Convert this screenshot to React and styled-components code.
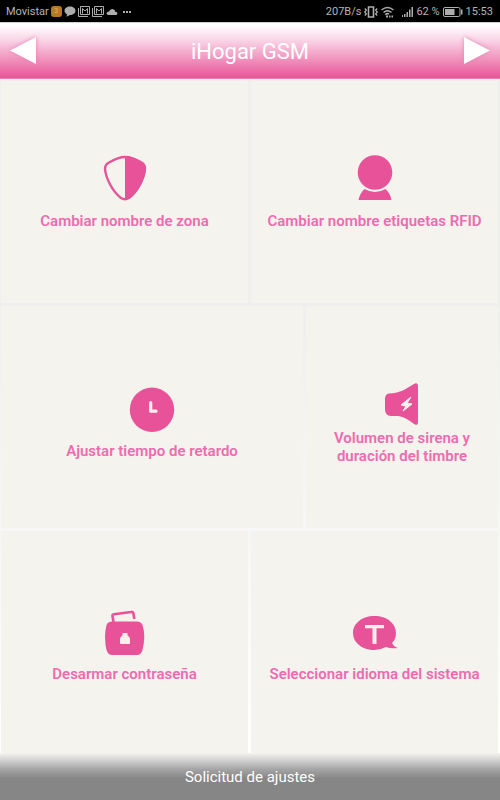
import styled, { createGlobalStyle } from 'styled-components';

const GlobalStyle = createGlobalStyle`
  * {
    box-sizing: border-box;
  }

  body {
    margin: 0;
    font-family: Roboto, 'Liberation Sans', sans-serif;
  }
`;

const Page = styled.div`
  display: flex;
  flex-direction: column;
  min-height: 100vh;
`;

const StatusBar = styled.div`
  display: flex;
  align-items: center;
  justify-content: space-between;
  height: 22px;
  padding: 1px 7px 0 6px;
  background: #000;
  color: #b4b4b4;
  font-size: 11px;
  line-height: 20px;
  white-space: nowrap;
`;

const StatusGroup = styled.div`
  display: flex;
  align-items: center;
  gap: ${({ $gap }) => $gap}px;

  svg {
    display: block;
  }
`;

const Badge = styled.span`
  width: 11px;
  height: 11px;
  border-radius: 3px;
  background: #b87820;
  color: #e0b070;
  font-size: 7px;
  line-height: 11px;
  text-align: center;
`;

const Header = styled.header`
  display: flex;
  align-items: center;
  justify-content: space-between;
  height: 57px;
  padding: 0 10px;
  background: linear-gradient(#fff 4%, #f9d3e5 32%, #f08fbb 68%, #e95599);
  border-top: 1px solid #d0d0d0;
  border-bottom: 1px solid #e87fb0;
`;

const Title = styled.h1`
  margin: 0;
  padding-top: 2px;
  color: #fff;
  font-size: 22px;
  font-weight: 400;
  line-height: 28px;
`;

const ArrowButton = styled.button`
  display: flex;
  padding: 0;
  border: none;
  background: none;
  cursor: pointer;
  filter: drop-shadow(0 0 2px #e87fb0);
`;

const Menu = styled.main`
  flex: 1;
  display: grid;
  grid-template-rows: repeat(3, 1fr);
  gap: 3px;
  padding: 2px 2px 0 1px;
  background: linear-gradient(#efeff0 35%, #fff);
`;

const MenuRow = styled.div`
  display: grid;
  grid-template-columns: ${({ $columns }) => $columns};
  gap: 3px;
`;

const Tile = styled.button`
  display: flex;
  flex-direction: column;
  align-items: center;
  justify-content: center;
  gap: ${({ $gap }) => $gap}px;
  min-width: 0;
  padding: ${({ $shift }) => $shift}px 8px 0;
  border: none;
  background: #f4f3ee;
  color: #ee6bb0;
  font-family: inherit;
  font-size: 15px;
  font-weight: 600;
  line-height: 18px;
  cursor: pointer;
`;

const TileIcon = styled.svg`
  width: 46px;
  height: 46px;
  fill: #e85298;
`;

const Label = styled.span`
  max-width: ${({ $narrow }) => ($narrow ? '150px' : 'none')};
`;

const Footer = styled.footer`
  height: 47px;
  background: linear-gradient(#f4f3ee, #d0d0d0 16%, #a6a6a6 34%, #868686 54%);
  color: #fff;
  font-size: 15px;
  line-height: 48px;
  text-align: center;
`;

const ShieldIcon = () => (
  <TileIcon viewBox="0 0 46 46">
    <path
      d="M23 2C18 2 13 4 7 7.500C4 9 3 11 3 14C4 24 11 37 19 43Q23 45.500 27 43C35 37 42 24 43 14C43 11 42 9 39 7.500C33 4 28 2 23 2Z"
      fill="none"
      stroke="#e85298"
      strokeWidth="2.400"
    />
    <path d="M23 1C29 1 34 3 40 6.500C43 8 44 11 44 14C43 25 36 38 28 43Q25 45 23 45Z" />
  </TileIcon>
);

const PersonIcon = () => (
  <TileIcon viewBox="0 0 46 46">
    <circle cx="23" cy="17.500" r="17.300" />
    <path d="M12.500 34Q23 40 33.500 34Q38 38 39.500 45H6.500Q8 38 12.500 34Z" />
  </TileIcon>
);

const ClockIcon = () => (
  <TileIcon viewBox="0 0 46 46">
    <circle cx="23" cy="22.700" r="22.200" />
    <path
      d="M21.700 15.500V24.200H27"
      fill="none"
      stroke="#f9f0ec"
      strokeWidth="3.200"
      strokeLinecap="round"
      strokeLinejoin="round"
    />
  </TileIcon>
);

const SirenIcon = () => (
  <TileIcon viewBox="0 0 46 46">
    <path d="M10 12.500C20 12.500 27 8 35 3C37 1.500 39 2 39 5V41C39 44 37 44.500 35 43C28 37.500 23 35 17 35H12C8 35 6 32 6 28V18Q6 13 10 12.500Z" />
    <path d="M32 16L22 24L27 25L24 30L33 23L28 22Z" fill="#f4f3ee" stroke="#f4f3ee" />
  </TileIcon>
);

const LockIcon = () => (
  <TileIcon viewBox="0 0 46 46">
    <path
      d="M11.500 12L10.500 6Q10.300 4.500 12 4.200L29 2Q31 1.600 31.500 3.500L32.300 9"
      fill="none"
      stroke="#e85298"
      strokeWidth="2.600"
    />
    <path d="M10 11.500H35Q39 11.500 40.500 15Q44 26 40.500 40Q39 45 35 45H10Q6 45 4.500 40Q1.500 27 4.500 15Q6 11.500 10 11.500Z" />
    <path
      d="M20.500 23H25.500V25.500Q28 26.500 28 29V33Q28 34 27 34H19Q18 34 18 33V29Q18 26.500 20.500 25.500Z"
      fill="#f9f0ec"
    />
  </TileIcon>
);

const LanguageIcon = () => (
  <TileIcon viewBox="0 0 46 46">
    <path d="M22.500 6C35 6 44 13.500 44 23Q44 29 40 33Q42 37 46 38Q39 39 34 37Q28 40 22.500 40C10 40 1 32.500 1 23S10 6 22.500 6Z" />
    <path d="M13 15H32V18.200H24.500V34H20.500V18.200H13Z" fill="#f9f0ec" />
  </TileIcon>
);

const MailIcon = () => (
  <svg width="12" height="11" viewBox="0 0 12 11" fill="none" stroke="#adadad">
    <path d="M.5 2V10.500H10M2.500.5H11.500V8.500H2.500ZM4.500 7.500V2.500L7 5L9.500 2.500V7.500" />
  </svg>
);

const rows = [
  {
    columns: '1fr 1fr',
    shift: 0,
    tiles: [
      { icon: ShieldIcon, label: 'Cambiar nombre de zona', gap: 11 },
      { icon: PersonIcon, label: 'Cambiar nombre etiquetas RFID', gap: 11 },
    ],
  },
  {
    columns: '302fr 192fr',
    shift: 12,
    tiles: [
      { icon: ClockIcon, label: 'Ajustar tiempo de retardo', gap: 9 },
      { icon: SirenIcon, label: 'Volumen de sirena y duración del timbre', gap: 2, narrow: true },
    ],
  },
  {
    columns: '1fr 1fr',
    shift: 8,
    tiles: [
      { icon: LockIcon, label: 'Desarmar contraseña', gap: 9 },
      { icon: LanguageIcon, label: 'Seleccionar idioma del sistema', gap: 9 },
    ],
  },
];

const PhoneStatus = () => (
  <StatusBar>
    <StatusGroup $gap={2}>
      <span>Movistar</span>
      <Badge>3</Badge>
      <svg width="12" height="11" viewBox="0 0 12 11" fill="#adadad">
        <path d="M6 .5C9 .5 11.500 2.300 11.500 4.700S9 9 6 9L2.500 10.800L3 8.200C1.300 7.500.5 6.200.5 4.700C.5 2.300 3 .5 6 .5Z" />
      </svg>
      <MailIcon />
      <MailIcon />
      <svg width="12" height="11" viewBox="0 0 12 11" fill="#adadad">
        <path d="M2.500 9Q.5 9 .5 7.200Q.8 5.500 3 5.500Q4 3 6.200 3Q8.800 3 9.200 5.700Q11.500 6 11.500 7.500Q11.300 9 9.500 9Z" />
      </svg>
      <svg width="12" height="11" viewBox="0 0 12 11" fill="#adadad">
        <path d="M3 5h2v2H3zM6 5h2v2H6zM9 5h2v2H9z" />
      </svg>
    </StatusGroup>
    <StatusGroup $gap={3}>
      <span>207B/s</span>
      <svg width="14" height="12" viewBox="0 0 14 12" fill="none" stroke="#adadad">
        <path d="M4.500 1H9.500V11H4.500Z" strokeWidth="1.600" />
        <path
          d="M.8 2.500L2.300 4L.8 6L2.300 8L.8 9.500M13.200 2.500L11.700 4L13.200 6L11.700 8L13.200 9.500"
          strokeWidth="1.300"
        />
      </svg>
      <svg width="13" height="12" viewBox="0 0 13 12" fill="none" stroke="#adadad" strokeWidth="1.500">
        <path d="M.5 4Q6.500-1 12.500 4M2.500 6.500Q6.500 3 10.500 6.500M4.300 8.700Q6 7 8 8" />
        <path d="M5 10.500H7M8 10.500H9.500M10.500 10.500H12" strokeWidth="2" />
      </svg>
      <svg width="16" height="12" viewBox="0 0 16 12" fill="#adadad">
        <path d="M5 9h1v2H5zM7 8h1.500v3H7zM9.500 6H11v5H9.500zM12 3.500h1.500V11H12zM14.500 1H16v10h-1.500z" />
      </svg>
      <span>62 %</span>
      <svg width="20" height="10" viewBox="0 0 20 10" fill="#adadad">
        <rect x=".5" y=".5" width="16.500" height="9" rx="1.500" fill="none" stroke="#adadad" />
        <path d="M2 2H11.500V8H2ZM18 2.500H19.500V7.500H18Z" />
      </svg>
      <span>15:53</span>
    </StatusGroup>
  </StatusBar>
);

const App = () => {
  return (
    <Page>
      <GlobalStyle />
      <PhoneStatus />
      <Header>
        <ArrowButton aria-label="Anterior">
          <svg width="26" height="27" viewBox="0 0 26 27" fill="#fff">
            <path d="M0 13.500L26 0V27Z" />
          </svg>
        </ArrowButton>
        <Title>iHogar GSM</Title>
        <ArrowButton aria-label="Siguiente">
          <svg width="26" height="27" viewBox="0 0 26 27" fill="#fff">
            <path d="M26 13.500L0 0V27Z" />
          </svg>
        </ArrowButton>
      </Header>
      <Menu>
        {rows.map((row, index) => (
          <MenuRow key={index} $columns={row.columns}>
            {row.tiles.map(({ icon: Icon, label, gap, narrow }) => (
              <Tile key={label} $gap={gap} $shift={row.shift}>
                <Icon />
                <Label $narrow={narrow}>{label}</Label>
              </Tile>
            ))}
          </MenuRow>
        ))}
      </Menu>
      <Footer>Solicitud de ajustes</Footer>
    </Page>
  );
};

export default App;
